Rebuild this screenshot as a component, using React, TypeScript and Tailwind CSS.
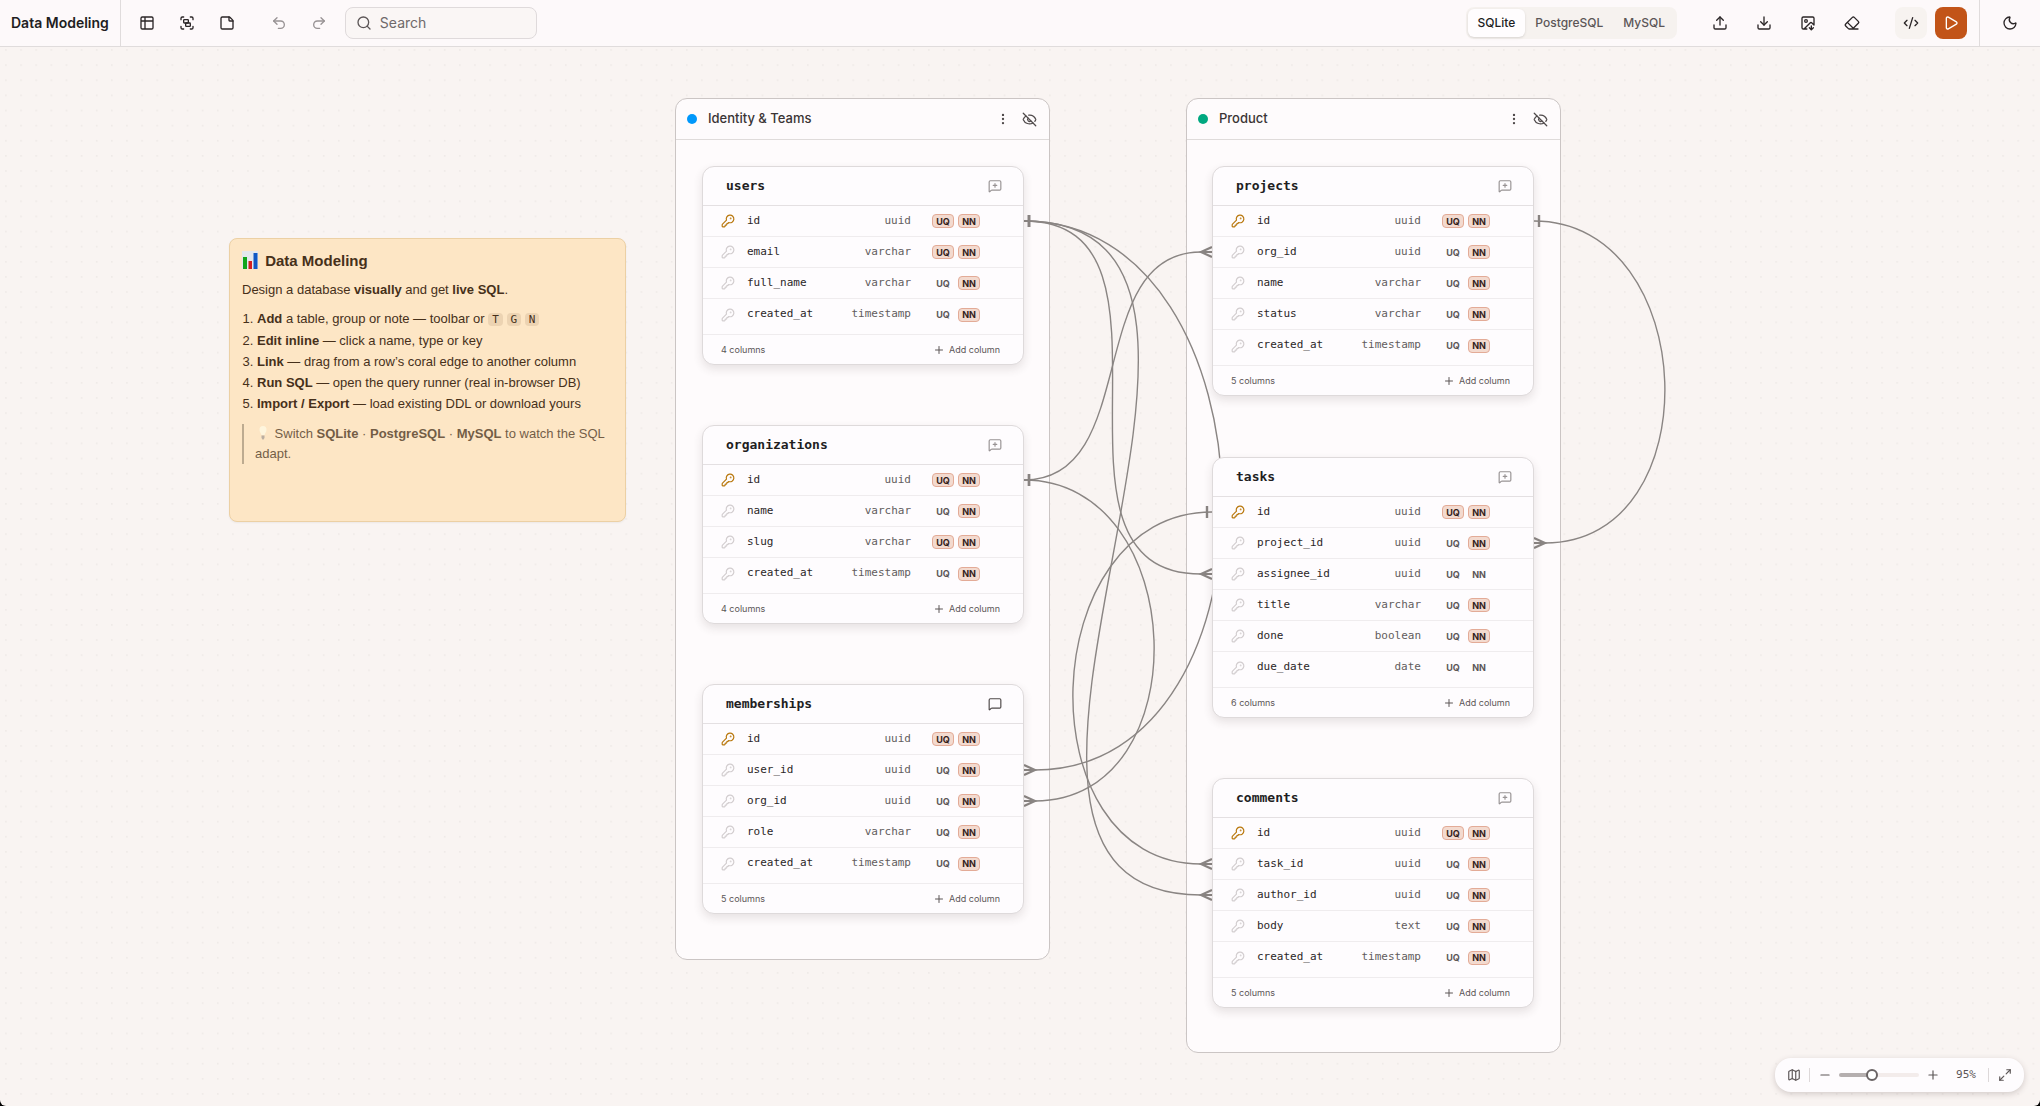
import { useState } from 'react'
import {
  CodeXml,
  Download,
  Eraser,
  EllipsisVertical,
  EyeOff,
  Group,
  ImageDown,
  KeyRound,
  Map as MapIcon,
  Maximize2,
  MessageSquare,
  MessageSquarePlus,
  Minus,
  Moon,
  Play,
  Plus,
  Redo2,
  Search,
  StickyNote,
  Table2,
  Undo2,
  Upload,
  type LucideIcon,
} from 'lucide-react'

type Column = { name: string; type: string; pk?: boolean; uq?: boolean; nullable?: boolean }
type TableNode = { id: string; x: number; y: number; commented?: boolean; columns: Column[] }
type Side = 'left' | 'right'
type End = { table: string; row: number; side: Side }
type Edge = { from: End; to: End; bend: number }

const TABLE_WIDTH = 322
const ROW_HEIGHT = 31
const FIRST_ROW = 55
const FOOT = 11

const pk: Column = { name: 'id', type: 'uuid', pk: true, uq: true }
const createdAt: Column = { name: 'created_at', type: 'timestamp' }

const GROUPS = [
  { id: 'identity', label: 'Identity & Teams', dot: 'bg-[#0098fb]', x: 675, y: 51, height: 862 },
  { id: 'product', label: 'Product', dot: 'bg-[#00a880]', x: 1186, y: 51, height: 955 },
]

const TABLES: TableNode[] = [
  {
    id: 'users',
    x: 702,
    y: 119,
    columns: [
      pk,
      { name: 'email', type: 'varchar', uq: true },
      { name: 'full_name', type: 'varchar' },
      createdAt,
    ],
  },
  {
    id: 'organizations',
    x: 702,
    y: 378,
    columns: [
      pk,
      { name: 'name', type: 'varchar' },
      { name: 'slug', type: 'varchar', uq: true },
      createdAt,
    ],
  },
  {
    id: 'memberships',
    x: 702,
    y: 637,
    commented: true,
    columns: [
      pk,
      { name: 'user_id', type: 'uuid' },
      { name: 'org_id', type: 'uuid' },
      { name: 'role', type: 'varchar' },
      createdAt,
    ],
  },
  {
    id: 'projects',
    x: 1212,
    y: 119,
    columns: [
      pk,
      { name: 'org_id', type: 'uuid' },
      { name: 'name', type: 'varchar' },
      { name: 'status', type: 'varchar' },
      createdAt,
    ],
  },
  {
    id: 'tasks',
    x: 1212,
    y: 410,
    columns: [
      pk,
      { name: 'project_id', type: 'uuid' },
      { name: 'assignee_id', type: 'uuid', nullable: true },
      { name: 'title', type: 'varchar' },
      { name: 'done', type: 'boolean' },
      { name: 'due_date', type: 'date', nullable: true },
    ],
  },
  {
    id: 'comments',
    x: 1212,
    y: 731,
    columns: [
      pk,
      { name: 'task_id', type: 'uuid' },
      { name: 'author_id', type: 'uuid' },
      { name: 'body', type: 'text' },
      createdAt,
    ],
  },
]

const EDGES: Edge[] = [
  {
    from: { table: 'users', row: 0, side: 'right' },
    to: { table: 'memberships', row: 1, side: 'right' },
    bend: 257,
  },
  {
    from: { table: 'organizations', row: 0, side: 'right' },
    to: { table: 'memberships', row: 2, side: 'right' },
    bend: 166,
  },
  {
    from: { table: 'organizations', row: 0, side: 'right' },
    to: { table: 'projects', row: 1, side: 'left' },
    bend: 118,
  },
  {
    from: { table: 'projects', row: 0, side: 'right' },
    to: { table: 'tasks', row: 1, side: 'right' },
    bend: 167,
  },
  {
    from: { table: 'users', row: 0, side: 'right' },
    to: { table: 'tasks', row: 2, side: 'left' },
    bend: 180,
  },
  {
    from: { table: 'tasks', row: 0, side: 'left' },
    to: { table: 'comments', row: 1, side: 'left' },
    bend: 178,
  },
  {
    from: { table: 'users', row: 0, side: 'right' },
    to: { table: 'comments', row: 2, side: 'left' },
    bend: 302,
  },
]

const DIALECTS = ['SQLite', 'PostgreSQL', 'MySQL']

function anchor(end: End) {
  const table = TABLES.find((t) => t.id === end.table)!
  return {
    x: end.side === 'right' ? table.x + TABLE_WIDTH : table.x,
    y: table.y + FIRST_ROW + end.row * ROW_HEIGHT,
    dir: end.side === 'right' ? 1 : -1,
  }
}

function Relation({ edge }: { edge: Edge }) {
  const a = anchor(edge.from)
  const b = anchor(edge.to)
  const tip = b.x + b.dir * FOOT
  const bar = a.x + a.dir * 5
  return (
    <g>
      <path
        d={`M${a.x} ${a.y}C${a.x + a.dir * edge.bend} ${a.y} ${tip + b.dir * edge.bend} ${b.y} ${tip} ${b.y}`}
        strokeWidth="1.4"
      />
      {/* "one" end */}
      <path d={`M${bar} ${a.y - 6}V${a.y + 6}`} strokeWidth="2.4" />
      {/* crow's foot on the "many" end */}
      <path
        d={`M${b.x} ${b.y - 5}L${tip} ${b.y}L${b.x} ${b.y + 5}M${tip} ${b.y}H${b.x}`}
        strokeWidth="2.2"
      />
    </g>
  )
}

function ToolButton({
  icon: Icon,
  label,
  className = 'text-[#2b2627]',
}: {
  icon: LucideIcon
  label: string
  className?: string
}) {
  return (
    <button
      aria-label={label}
      title={label}
      className={`flex size-8 items-center justify-center rounded-lg ${className}`}
    >
      <Icon size={16} />
    </button>
  )
}

function Toolbar() {
  const [dialect, setDialect] = useState('SQLite')

  return (
    <header className="flex h-[47px] shrink-0 items-center border-b border-[#e0dcdc] bg-[#fdf9fa]">
      <h1 className="flex h-full items-center border-r border-[#e0dcdc] px-[11px] text-sm font-semibold whitespace-nowrap text-[#221e1f]">
        Data Modeling
      </h1>
      <div className="flex items-center gap-2 pl-[10px]">
        <ToolButton icon={Table2} label="Add table" />
        <ToolButton icon={Group} label="Add group" />
        <ToolButton icon={StickyNote} label="Add note" />
      </div>
      <div className="flex items-center gap-2 pl-5">
        <ToolButton icon={Undo2} label="Undo" className="text-[#989394]" />
        <ToolButton icon={Redo2} label="Redo" className="text-[#989394]" />
      </div>
      <label className="ml-[10px] flex h-8 w-48 items-center gap-2 rounded-lg border border-[#dfdadb] bg-[#faf6f5] px-[10px]">
        <Search size={16} className="shrink-0 text-[#5c5657]" />
        <input
          type="text"
          aria-label="Search"
          placeholder="Search"
          className="w-full min-w-0 bg-transparent text-sm text-[#2b2627] outline-none placeholder:text-[#6f696a]"
        />
      </label>

      <div className="ml-auto flex rounded-lg bg-[#f6f2ef] p-0.5">
        {DIALECTS.map((name) => (
          <button
            key={name}
            onClick={() => setDialect(name)}
            aria-pressed={dialect === name}
            className={`h-7 rounded-md px-[10px] text-xs font-medium ${
              dialect === name ? 'bg-[#fffdfe] text-[#221e1f] shadow-sm' : 'text-[#5c5657]'
            }`}
          >
            {name}
          </button>
        ))}
      </div>
      <div className="flex items-center gap-3 pl-[27px]">
        <ToolButton icon={Upload} label="Import" />
        <ToolButton icon={Download} label="Export" />
        <ToolButton icon={ImageDown} label="Export image" />
        <ToolButton icon={Eraser} label="Clear" />
      </div>
      <div className="flex items-center gap-2 pr-3 pl-[27px]">
        <ToolButton icon={CodeXml} label="SQL" className="bg-[#f7f3f0] text-[#2b2627]" />
        <ToolButton icon={Play} label="Run" className="bg-[#c25418] text-white" />
      </div>
      <div className="flex h-full items-center border-l border-[#e0dcdc] px-[14px]">
        <ToolButton icon={Moon} label="Toggle theme" />
      </div>
    </header>
  )
}

function Badge({ on, label }: { on: boolean; label: string }) {
  return (
    <button
      aria-pressed={on}
      className={`flex h-[14px] w-[22px] items-center justify-center rounded-sm border text-[9px] leading-none font-bold ${
        on ? 'border-[#e3ab97] bg-[#f3dacf] text-[#33211b]' : 'border-transparent text-[#5c5657]'
      }`}
    >
      {label}
    </button>
  )
}

function SchemaTable({ table }: { table: TableNode }) {
  const NoteIcon = table.commented ? MessageSquare : MessageSquarePlus
  return (
    <article
      className="absolute w-[322px] rounded-xl border border-[#dedadb] bg-[#fefcfe] shadow-[0_4px_10px_rgba(60,40,40,0.12)]"
      style={{ left: table.x, top: table.y }}
    >
      <header className="flex h-[39px] items-center justify-between border-b border-[#e4e0e2] pr-[21px] pl-[23px]">
        <h3 className="font-['DejaVu_Sans_Mono',monospace] text-[13px] font-bold text-[#221e1f]">
          {table.id}
        </h3>
        <button
          aria-label={`Comment on ${table.id}`}
          className={table.commented ? 'text-[#4f494a]' : 'text-[#989394]'}
        >
          <NoteIcon size={14} />
        </button>
      </header>
      <table className="w-full border-separate border-spacing-0 font-['DejaVu_Sans_Mono',monospace] text-[11px]">
        <tbody className="[&>tr:last-child>td]:border-b-0">
          {table.columns.map((col) => (
            <tr key={col.name} className="h-[31px] [&>td]:border-b [&>td]:border-[#efecee] [&>td]:p-0">
              <td className="w-11">
                <button
                  aria-label={`Primary key ${col.name}`}
                  className={`ml-[18px] flex ${col.pk ? 'text-[#b8760a]' : 'text-[#d2cdcf]'}`}
                >
                  <KeyRound size={14} />
                </button>
              </td>
              <td className="text-[#2b2627]">{col.name}</td>
              <td className="text-right text-[#625c5d]">{col.type}</td>
              <td className="w-[112px] font-['Inter',sans-serif]">
                <div className="flex gap-1 pl-[21px]">
                  <Badge on={!!col.uq} label="UQ" />
                  <Badge on={!col.nullable} label="NN" />
                </div>
              </td>
            </tr>
          ))}
        </tbody>
      </table>
      <footer className="mt-1 flex h-[30px] items-center justify-between border-t border-[#efecee] pr-[23px] pl-[18px] text-[9px] text-[#5c5657]">
        <span>{table.columns.length} columns</span>
        <button className="flex items-center gap-1">
          <Plus size={12} />
          Add column
        </button>
      </footer>
    </article>
  )
}

function ChartEmoji() {
  return (
    <svg viewBox="0 0 16 18" className="mr-[3px] inline-block h-[18px] w-4 align-[-3px]" aria-hidden="true">
      <rect width="16" height="18" fill="#e3e8ee" />
      <rect x="1" y="6" width="4" height="12" fill="#12a51c" />
      <rect x="6.500" y="10" width="3.500" height="8" fill="#d3201f" />
      <rect x="11.500" y="2" width="4" height="16" fill="#1158c4" />
    </svg>
  )
}

function BulbEmoji() {
  return (
    <svg viewBox="0 0 16 16" className="inline-block size-4 align-[-3px]" aria-hidden="true">
      <path d="M4.500 4.500a3.500 3.500 0 0 1 7 0c0 2.500-1.500 3.500-2 5.500h-3c-.5-2-2-3-2-5.500z" fill="#fffbe6" />
      <path d="M6.500 10.500h3v2.500l-1.500 2-1.500-2z" fill="#a49c95" />
    </svg>
  )
}

function Key({ children }: { children: string }) {
  return (
    <code className="rounded-sm bg-[#ecd3b2] px-1 font-['DejaVu_Sans_Mono',monospace] text-[11px]">
      {children}
    </code>
  )
}

function NoteCard() {
  return (
    <aside className="absolute top-[191px] left-[229px] h-[284px] w-[397px] rounded-lg border border-[#ecd0a4] bg-[#fde6c5] px-3 py-[10px] font-['Liberation_Sans',sans-serif] text-[13px] leading-[21px] text-[#46301a] shadow-xs">
      <h2 className="text-[15px] leading-6 font-bold">
        <ChartEmoji /> Data Modeling
      </h2>
      <p className="mt-[6px]">
        Design a database <b>visually</b> and get <b>live SQL</b>.
      </p>
      <ol className="mt-2 list-decimal pl-[15px]">
        <li>
          <b>Add</b> a table, group or note — toolbar or <Key>T</Key> <Key>G</Key> <Key>N</Key>
        </li>
        <li>
          <b>Edit inline</b> — click a name, type or key
        </li>
        <li>
          <b>Link</b> — drag from a row’s coral edge to another column
        </li>
        <li>
          <b>Run SQL</b> — open the query runner (real in-browser DB)
        </li>
        <li>
          <b>Import / Export</b> — load existing DDL or download yours
        </li>
      </ol>
      <blockquote className="mt-[10px] border-l-2 border-[#a8987f] pl-[11px] leading-5 opacity-75">
        <BulbEmoji /> Switch <b>SQLite</b> · <b>PostgreSQL</b> · <b>MySQL</b> to watch the SQL adapt.
      </blockquote>
    </aside>
  )
}

function ZoomPanel() {
  const [zoom, setZoom] = useState(95)
  const filled = ((zoom - 25) / 175) * 100

  return (
    <div className="absolute right-4 bottom-[14px] flex h-[34px] items-center rounded-2xl bg-[#fefcfe] px-3 text-[#5c5657] shadow-[0_2px_6px_rgba(60,40,40,0.2)]">
      <button aria-label="Minimap">
        <MapIcon size={14} />
      </button>
      <span className="mx-2 h-[14px] w-px bg-[#ddd8d9]" />
      <button aria-label="Zoom out" onClick={() => setZoom(Math.max(25, zoom - 5))}>
        <Minus size={14} />
      </button>
      <input
        type="range"
        aria-label="Zoom"
        min={25}
        max={200}
        value={zoom}
        onChange={(e) => setZoom(Number(e.target.value))}
        className="mx-[7px] h-1 w-20 appearance-none rounded-full [&::-webkit-slider-thumb]:size-3 [&::-webkit-slider-thumb]:appearance-none [&::-webkit-slider-thumb]:rounded-full [&::-webkit-slider-thumb]:border-2 [&::-webkit-slider-thumb]:border-[#6a6465] [&::-webkit-slider-thumb]:bg-white"
        style={{ background: `linear-gradient(to right, #b5afaf ${filled}%, #f3eceb ${filled}%)` }}
      />
      <button aria-label="Zoom in" onClick={() => setZoom(Math.min(200, zoom + 5))}>
        <Plus size={14} />
      </button>
      <output className="w-12 pl-1 text-center font-['DejaVu_Sans_Mono',monospace] text-[11px]">
        {zoom}%
      </output>
      <span className="mr-[9px] h-[14px] w-px bg-[#ddd8d9]" />
      <button aria-label="Fit view">
        <Maximize2 size={14} />
      </button>
    </div>
  )
}

export default function App() {
  return (
    <div className="h-screen bg-black font-['Inter',sans-serif]">
      <div className="flex h-full flex-col overflow-hidden rounded-b-md bg-[#f9f4f2]">
        <Toolbar />
        <main className="relative min-h-0 flex-1 overflow-hidden">
          {/* Dotted canvas background */}
          <svg className="absolute inset-0 size-full" aria-hidden="true">
            <pattern id="dots" x="-1.500" y="-4.500" width="15.130" height="15.130" patternUnits="userSpaceOnUse">
              <circle cx="7.500" cy="7.500" r="0.600" fill="#e0dad7" />
            </pattern>
            <rect width="100%" height="100%" fill="url(#dots)" />
          </svg>

          {GROUPS.map((group) => (
            <section
              key={group.id}
              className="absolute w-[375px] rounded-xl border border-[#cbc5c4] bg-[#fefbfc]"
              style={{ left: group.x, top: group.y, height: group.height }}
            >
              <header className="flex h-[41px] items-center border-b border-[#dfdbda] pr-3 pl-[11px] text-[#4f494a]">
                <span className={`size-[10px] rounded-full ${group.dot}`} />
                <h2 className="mr-auto ml-[11px] text-[13px] font-medium text-[#3a3435]">{group.label}</h2>
                <button aria-label="Group menu">
                  <EllipsisVertical size={14} />
                </button>
                <button aria-label="Hide group" className="ml-3">
                  <EyeOff size={15} />
                </button>
              </header>
            </section>
          ))}

          <svg className="absolute inset-0 size-full" fill="none" stroke="#8a8583" aria-hidden="true">
            {EDGES.map((edge, i) => (
              <Relation key={i} edge={edge} />
            ))}
          </svg>

          {TABLES.map((table) => (
            <SchemaTable key={table.id} table={table} />
          ))}

          <NoteCard />
          <ZoomPanel />
        </main>
      </div>
    </div>
  )
}
